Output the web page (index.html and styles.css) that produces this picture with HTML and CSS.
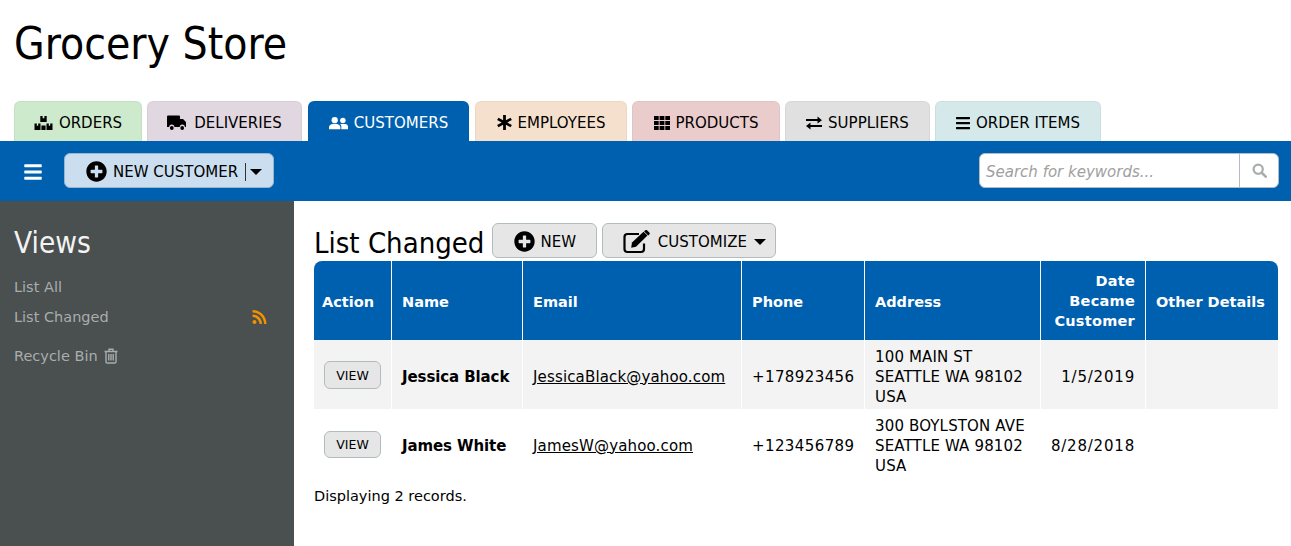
FILE: index.html
```html
<!DOCTYPE html>
<html lang="en">
<head>
<meta charset="utf-8">
<title>Grocery Store</title>
<link rel="stylesheet" href="styles.css">
</head>
<body>
<svg class="defs" width="0" height="0" aria-hidden="true">
  <symbol id="i-plus" viewBox="0 0 512 512"><path d="M256 8C119 8 8 119 8 256s111 248 248 248 248-111 248-248S393 8 256 8zm144 276c0 6.6-5.4 12-12 12h-92v92c0 6.6-5.4 12-12 12h-56c-6.6 0-12-5.4-12-12v-92h-92c-6.6 0-12-5.4-12-12v-56c0-6.6 5.4-12 12-12h92v-92c0-6.6 5.4-12 12-12h56c6.6 0 12 5.4 12 12v92h92c6.6 0 12 5.4 12 12v56z"/></symbol>
  <symbol id="i-bars" viewBox="0 0 448 512"><path d="M16 132h416c8.837 0 16-7.163 16-16V76c0-8.837-7.163-16-16-16H16C7.163 60 0 67.163 0 76v40c0 8.837 7.163 16 16 16zm0 160h416c8.837 0 16-7.163 16-16v-40c0-8.837-7.163-16-16-16H16c-8.837 0-16 7.163-16 16v40c0 8.837 7.163 16 16 16zm0 160h416c8.837 0 16-7.163 16-16v-40c0-8.837-7.163-16-16-16H16c-8.837 0-16 7.163-16 16v40c0 8.837 7.163 16 16 16z"/></symbol>
</svg>

<header class="site-header"><h1 class="site-title">Grocery Store</h1></header>

<nav class="tabs">
  <a class="tab tab-orders"><svg class="ico" viewBox="0 0 18 16"><path d="M5.800 1h2.300v2.200h1.800V1h2.300v6H5.800zM0 8.500h2.300v2.200h1.400V8.500H6V15H0zM12 8.500h2.300v2.200h1.400V8.500H18V15h-6zM6.900 10.500h4.200V15H6.900z"/></svg>ORDERS</a>
  <a class="tab tab-deliveries"><svg class="ico ico-truck" viewBox="0 0 20 16"><path d="M1 .5h11a1 1 0 0 1 1 1V4h2.600a1 1 0 0 1 .7.300l2.400 2.400a1 1 0 0 1 .3.700V12h-1.100a2.600 2.600 0 0 0-5.200 0H7.400a2.600 2.600 0 0 0-5.200 0H0V1.500a1 1 0 0 1 1-1z"/><circle cx="4.800" cy="13" r="1.900"/><circle cx="15.200" cy="13" r="1.900"/></svg>DELIVERIES</a>
  <a class="tab tab-customers"><svg class="ico ico-users" viewBox="0 0 20 16"><circle cx="6" cy="5" r="3.300"/><circle cx="14.600" cy="5.300" r="2.900"/><path d="M0 14.500v-2C0 10.300 2 9 4 9h4c2 0 4 1.300 4 3.500v2zM13 14.500v-2.500c0-1.200-.5-2.200-1.200-3H17c1.800 0 3 1.200 3 3v2.500z"/></svg>CUSTOMERS</a>
  <a class="tab tab-employees"><svg class="ico ico-star" viewBox="0 0 14 14"><path d="M5.700 0h2.600v5L12.600 2.500l1.300 2.200L9.600 7l4.300 2.300-1.300 2.200L8.300 9v5H5.700V9l-4.300 2.500L.1 9.300 4.400 7 .1 4.700l1.300-2.200L5.700 5z"/></svg>EMPLOYEES</a>
  <a class="tab tab-products"><svg class="ico ico-grid" viewBox="0 0 16 14"><path d="M0 0h4.700v4H0zM5.600 0h4.800v4H5.600zM11.300 0H16v4h-4.700zM0 5h4.700v4H0zM5.600 5h4.800v4H5.600zM11.300 5H16v4h-4.700zM0 10h4.700v4H0zM5.600 10h4.800v4H5.600zM11.300 10H16v4h-4.700z"/></svg>PRODUCTS</a>
  <a class="tab tab-suppliers"><svg class="ico ico-swap" viewBox="0 0 16 14"><path d="M0 3h11.500V.5L16 4.200 11.500 7.500V5H0zM16 9H4.500V6.500L0 10 4.500 13.500V11H16z"/></svg>SUPPLIERS</a>
  <a class="tab tab-items"><svg class="ico ico-list"><use href="#i-bars"/></svg>ORDER ITEMS</a>
</nav>

<div class="toolbar">
  <button class="menu-btn" type="button" aria-label="Menu"><svg class="ico-bars"><use href="#i-bars"/></svg></button>
  <button class="new-btn" type="button"><svg class="ico-plus"><use href="#i-plus"/></svg><span class="new-label">NEW CUSTOMER</span><span class="caret-cell"><span class="caret"></span></span></button>
  <form class="search">
    <input class="search-input" type="text" placeholder="Search for keywords...">
    <span class="search-btn"><svg viewBox="0 0 16 16" width="15" height="15"><circle cx="6.600" cy="6.600" r="4.900" fill="none" stroke="#a9adad" stroke-width="2.400"/><path d="M10.400 10.400 14.600 14.600" stroke="#a9adad" stroke-width="2.800" stroke-linecap="round"/></svg></span>
  </form>
</div>

<div class="page">
  <aside class="sidebar">
    <h2 class="side-title">Views</h2>
    <a class="side-link">List All</a>
    <a class="side-link side-link-rss">List Changed
      <svg class="rss" viewBox="0 0 448 512"><path d="M128.081 415.959c0 35.369-28.672 64.041-64.041 64.041S0 451.328 0 415.959s28.672-64.041 64.041-64.041 64.040 28.673 64.040 64.041zm175.660 47.250c-8.354-154.600-132.185-278.587-286.950-286.950C7.656 175.765 0 183.105 0 192.253v48.069c0 8.415 6.490 15.472 14.887 16.018 111.832 7.284 201.473 96.702 208.772 208.772.547 8.397 7.604 14.887 16.018 14.887h48.069c9.149.001 16.489-7.655 15.995-16.790zm144.249.288C439.596 229.677 251.465 40.445 16.503 32.010 7.473 31.686 0 38.981 0 48.016v48.068c0 8.625 6.835 15.645 15.453 15.999 191.179 7.839 344.627 161.316 352.465 352.465.353 8.618 7.373 15.453 15.999 15.453h48.068c9.034-.001 16.329-7.474 16.005-16.504z"/></svg>
    </a>
    <a class="side-link side-link-bin">Recycle Bin
      <svg class="bin" viewBox="0 0 14 16"><path d="M.5 3.500h13M5 3.300V1.200h4v2.100M2 3.500v10.300c0 .7.500 1.200 1.200 1.200h7.600c.7 0 1.200-.5 1.200-1.200V3.500M4.800 6v6.500M7 6v6.500M9.200 6v6.500" fill="none" stroke="currentColor" stroke-width="1.400"/></svg>
    </a>
  </aside>

  <main class="content">
    <div class="content-head">
      <h2 class="content-title">List Changed</h2>
      <button class="btn btn-new" type="button"><svg class="ico-plus"><use href="#i-plus"/></svg>NEW</button>
      <button class="btn btn-custom" type="button"><svg class="ico-edit" viewBox="0 0 28 24"><path d="M21 13.500V19a3 3 0 0 1-3 3H4.500a3 3 0 0 1-3-3V7a3 3 0 0 1 3-3H16" fill="none" stroke="#000" stroke-width="2.200"/><path d="M9 12.500 20.500 1.800l4 3.800L13 16.700l-4.800 1z"/><path d="M22 .4a1.500 1.500 0 0 1 2-.1l2.300 2.200a1.500 1.500 0 0 1 0 2l-1 1-4.200-4z"/></svg>CUSTOMIZE<span class="caret"></span></button>
    </div>
    <table class="grid">
      <colgroup><col class="c1"><col class="c2"><col class="c3"><col class="c4"><col class="c5"><col class="c6"><col class="c7"></colgroup>
      <thead>
        <tr><th>Action</th><th class="pad">Name</th><th class="pad">Email</th><th class="pad">Phone</th><th class="pad">Address</th><th class="num">Date Became Customer</th><th class="pad">Other Details</th></tr>
      </thead>
      <tbody>
        <tr>
          <td class="act"><button class="view" type="button">VIEW</button></td><td class="pad name">Jessica Black</td><td class="pad"><a class="mail">JessicaBlack@yahoo.com</a></td><td class="pad phone">+178923456</td><td class="pad addr">100 MAIN ST<br>SEATTLE WA 98102<br>USA</td><td class="num date">1/5/2019</td><td></td>
        </tr>
        <tr>
          <td class="act"><button class="view" type="button">VIEW</button></td><td class="pad name">James White</td><td class="pad"><a class="mail">JamesW@yahoo.com</a></td><td class="pad phone">+123456789</td><td class="pad addr">300 BOYLSTON AVE<br>SEATTLE WA 98102<br>USA</td><td class="num date">8/28/2018</td><td></td>
        </tr>
      </tbody>
    </table>
    <p class="count">Displaying 2 records.</p>
  </main>
</div>
</body>
</html>
```

FILE: styles.css
```css
* { box-sizing: border-box; }
html, body { margin: 0; height: 100%; }
body {
  font-family: "DejaVu Sans", Verdana, sans-serif;
  font-size: 15px;
  color: #000;
  background: #fff;
  display: flex;
  flex-direction: column;
  height: 546px;
  overflow: hidden;
}
.defs { display: block; height: 0; }

.site-header { height: 101px; padding: 16px 14px 0; }
.site-title { margin: 0; font-weight: 400; font-size: 44px; line-height: 56px; font-family: "DejaVu Sans Condensed", "DejaVu Sans", sans-serif; }

.tabs { display: flex; height: 40px; padding-left: 14px; }
.tab {
  display: flex; align-items: center; justify-content: center;
  border-radius: 6px 6px 0 0;
  margin-right: 5px;
  height: 40px;
  padding-top: 2px;
  border: 1px solid rgba(0,0,0,.04);
  border-bottom: 0;
  white-space: nowrap;
}
.tab-orders { width: 128px; background: #cdeacd; }
.tab-deliveries { width: 155px; background: #e1d7e1; }
.tab-customers { width: 161px; background: #0060b0; color: #fff; margin-left: 1px; margin-right: 6px; }
.tab-employees { width: 152px; background: #f5e0cd; }
.tab-products { width: 148px; background: #eacccc; }
.tab-suppliers { width: 145px; background: #e0e0e0; }
.tab-items { width: 166px; background: #d5e9ea; }
.ico { width: 19px; height: 16px; margin-right: 6px; fill: currentColor; flex: none; }
.ico-truck { width: 20px; margin-right: 7px; }
.ico-star { width: 15px; height: 15px; }
.ico-grid { width: 16px; height: 14px; }
.ico-swap { width: 16px; height: 14px; }
.ico-list { width: 14px; height: 16px; }

.toolbar {
  height: 60px; background: #0060b0;
  display: flex; align-items: flex-start;
  padding: 12px 12px 0 24px;
}
.menu-btn { background: none; border: 0; padding: 0; width: 18px; height: 20px; margin: 9px 22px 0 0; display: flex; }
.ico-bars { width: 18px; height: 20px; fill: #fff; }
.new-btn {
  height: 35px; width: 210px;
  background: #cbdeef; border: 1px solid #98b5d0; border-radius: 6px;
  display: flex; align-items: center;
  padding: 2px 0 0 21px;
  font: inherit; color: #000;
}
.ico-plus { width: 21px; height: 21px; fill: #000; flex: none; margin-right: 6px; }
.new-label { white-space: nowrap; }
.caret-cell { border-left: 1px solid #333; height: 18px; margin-left: 7px; padding-left: 4px; display: flex; align-items: center; }
.caret { display: inline-block; width: 0; height: 0; border: 6px solid transparent; border-top: 6px solid #000; border-bottom: 0; }
.search { margin-left: auto; display: flex; width: 300px; height: 35px; background: #fff; border: 1px solid #b3bcc4; border-radius: 6px; overflow: hidden; }
.search-input { flex: 1; min-width: 0; border: 0; outline: 0; padding: 2px 6px 0; font: italic 15px "DejaVu Sans", sans-serif; color: #000; background: none; }
.search-input::placeholder { color: #a0a0a0; opacity: 1; }
.search-btn { width: 39px; border-left: 1px solid #b3bcc4; display: flex; align-items: center; justify-content: center; }

.page { flex: 1; display: flex; min-height: 0; }
.sidebar { width: 294px; background: #4a4f4f; padding: 22px 14px 0; color: #a9adad; flex: none; font-size: 14.500px; }
.side-title { margin: 0 0 9px; font-weight: 400; font-size: 29.500px; line-height: 40px; color: #f3f3f3; font-family: "DejaVu Sans Condensed", "DejaVu Sans", sans-serif; }
.side-link { display: flex; align-items: center; height: 30px; }
.side-link-rss { justify-content: space-between; padding-right: 13px; }
.side-link-bin { margin-top: 9px; }
.rss { width: 15px; height: 16px; fill: #f39200; }
.bin { width: 14px; height: 16px; margin-left: 6px; }

.content { flex: 1; min-width: 0; padding: 22px 13px 0 20px; }
.content-head { display: flex; align-items: flex-start; height: 38px; }
.content-title { margin: 0 8px 0 0; font-weight: 400; font-size: 29px; line-height: 40px; font-family: "DejaVu Sans Condensed", "DejaVu Sans", sans-serif; }
.btn { height: 35px; background: #e6e6e6; border: 1px solid #b3bcbc; border-radius: 6px; font: inherit; color: #000; display: flex; align-items: center; justify-content: center; margin-right: 5px; padding: 2px 0 0; }
.btn-new { width: 105px; }
.btn-custom { width: 174px; padding-left: 10px; }
.ico-edit { width: 28px; height: 24px; margin-right: 7px; flex: none; }
.btn-custom .caret { margin-left: 7px; }

.grid { border-collapse: separate; border-spacing: 0; table-layout: fixed; width: 964px; }
.c1 { width: 78px; } .c2 { width: 131px; } .c3 { width: 219px; } .c4 { width: 123px; } .c5 { width: 176px; } .c6 { width: 105px; } .c7 { width: 132px; }
.grid th { background: #0060b0; color: #fff; height: 79px; text-align: left; font-weight: 700; font-size: 14.500px; padding: 2px 8px 0; border-right: 1px solid #fff; line-height: 20px; }
.grid th:first-child { border-top-left-radius: 8px; }
.grid th:last-child { border-top-right-radius: 8px; border-right: 0; }
.grid th.pad, .grid td.pad { padding-left: 10px; padding-right: 6px; }
.grid th.num, .grid td.num { text-align: right; padding-right: 10px; padding-left: 8px; }
.grid th.num { padding-top: 0; letter-spacing: .25px; }
.grid td { height: 69px; padding: 4px 8px 0; border-right: 1px solid #fff; line-height: 20px; white-space: nowrap; }
.grid td:last-child { border-right: 0; }
.grid tbody tr:first-child td { background: #f3f3f3; }
.grid td.act { padding-left: 10px; padding-top: 1px; }
.grid tbody tr:last-child td.act { padding-top: 2px; }
.name { font-weight: 700; letter-spacing: -.1px; }
.mail { color: #000; text-decoration: underline; letter-spacing: .15px; }
.phone { letter-spacing: .4px; }
.addr { letter-spacing: .15px; }
.date { letter-spacing: .8px; }
.view { display: block; width: 57px; height: 28px; background: #e6e6e6; border: 1px solid #b3bcbc; border-radius: 6px; font: 12.500px "DejaVu Sans", sans-serif; color: #000; padding: 0; }
.grid tbody tr:last-child .view { height: 27px; }
.count { margin: 8px 0 0; line-height: 20px; font-size: 14.500px; }
```
